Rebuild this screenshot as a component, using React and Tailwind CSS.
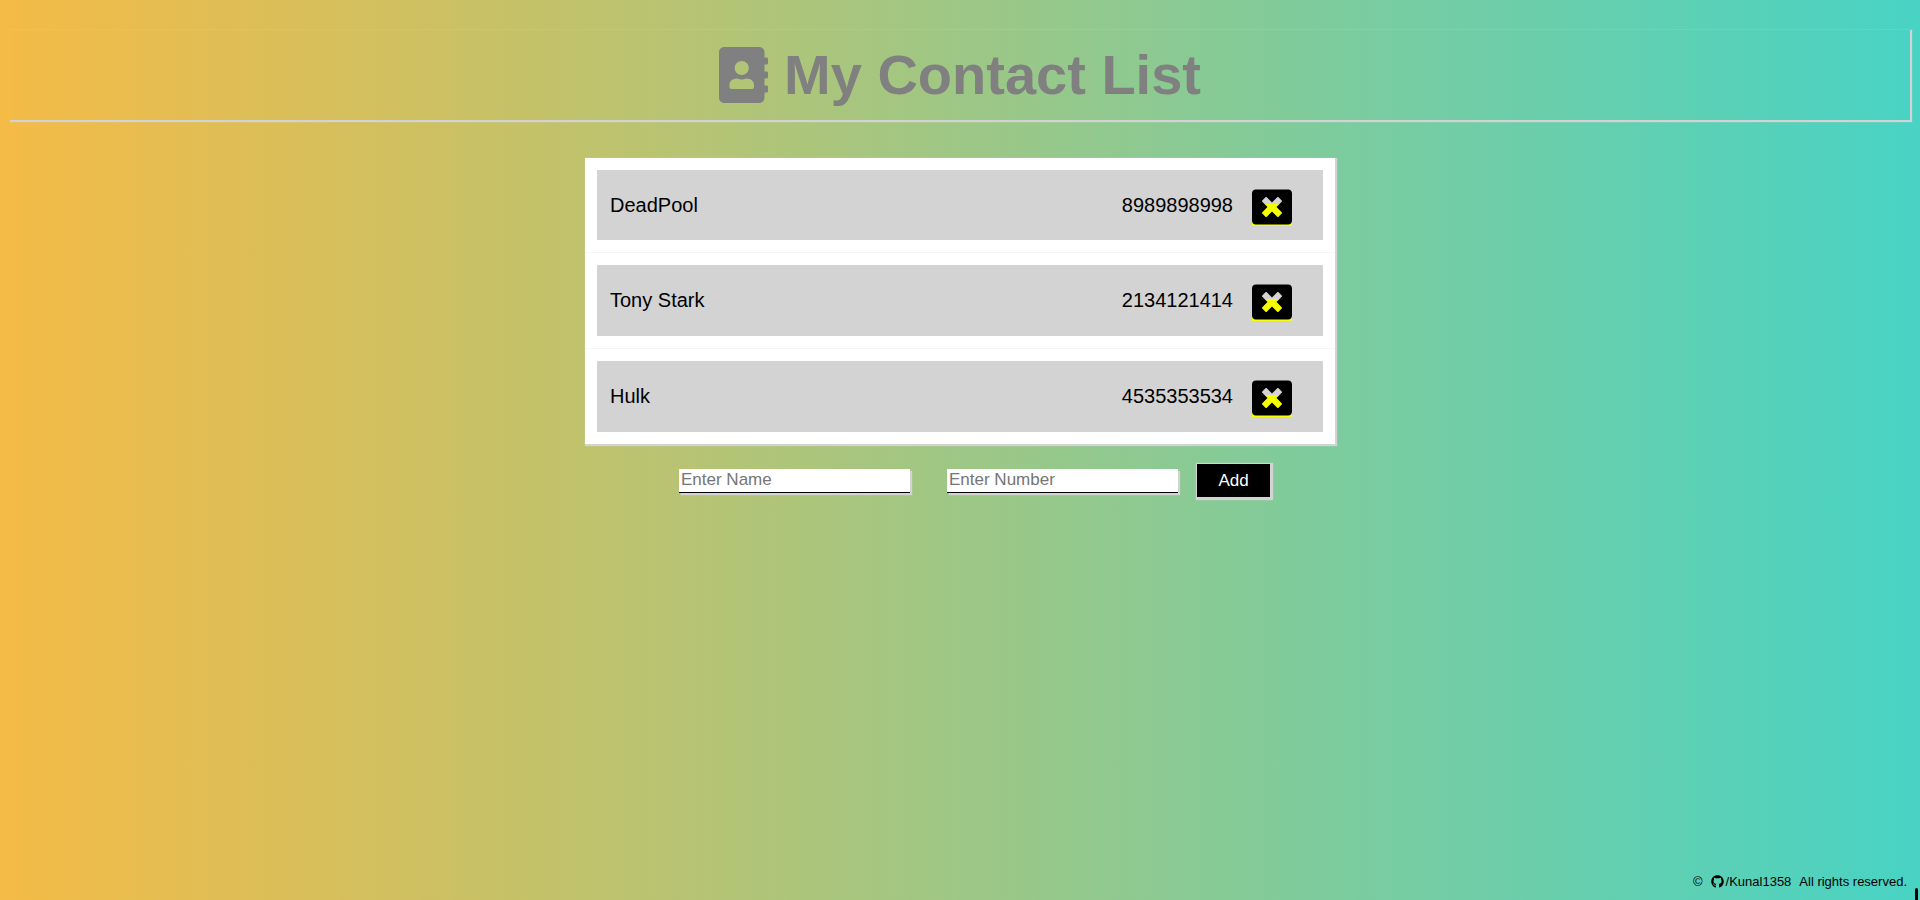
import { FaAddressBook, FaGithub, FaWindowClose } from "react-icons/fa";

const contacts = [
  { name: "DeadPool", number: "8989898998" },
  { name: "Tony Stark", number: "2134121414" },
  { name: "Hulk", number: "4535353534" },
];

function ContactRow({ name, number }) {
  return (
    <li className="flex border-b border-[#f5f5f5] p-3 last:border-b-0">
      <div className="flex flex-1 items-center bg-[#d3d3d3] pr-[31px] pl-[13px] text-xl text-black">
        <span className="flex-1">{name}</span>
        <span>{number}</span>
        <button
          type="button"
          aria-label={`Delete ${name}`}
          className="mt-0.5 ml-[19px] bg-linear-to-b from-transparent from-43% to-[#f6ff00] to-43%"
        >
          <FaWindowClose className="-mb-px size-10" />
        </button>
      </div>
    </li>
  );
}

function Field({ label, type }) {
  return (
    <input
      type={type}
      aria-label={label}
      placeholder={label}
      className="h-6 w-[231px] border-b border-black bg-white px-0.5 text-[17px] leading-5 text-black shadow-[2px_2px_1px_0px_#d3d3d3] outline-none placeholder:text-[#757575]"
    />
  );
}

export default function App() {
  return (
    <div className="flex min-h-screen flex-col bg-linear-to-r/srgb from-[#f4bb46] to-[#48d3c4] px-2.5 pt-[30px] font-['Liberation_Sans',Arial,sans-serif]">
      <h1 className="flex h-[90px] items-center justify-center gap-4 text-[56px] font-bold text-[#808080] shadow-[1px_1px_1px_1px_#d3d3d3]">
        <FaAddressBook className="h-14 w-[49px]" />
        <span>My Contact List</span>
      </h1>

      <main className="mt-[38px] flex flex-1 flex-col items-center">
        <ul className="grid min-h-[286px] w-full max-w-[750px] auto-rows-fr bg-white shadow-[1px_1px_1px_1px_#d3d3d3]">
          {contacts.map((contact) => (
            <ContactRow key={contact.name} {...contact} />
          ))}
        </ul>

        <form className="mt-5 flex items-center pl-[29px]">
          <Field label="Enter Name" type="text" />
          <div className="ml-[37px] flex">
            <Field label="Enter Number" type="text" />
          </div>
          <button
            type="button"
            className="ml-[19px] h-[33px] w-[73px] bg-black text-[17px] text-white shadow-[1px_1px_1px_2px_#d3d3d3]"
          >
            Add
          </button>
        </form>
      </main>

      <footer className="flex items-end justify-end text-[13px] text-black">
        <p className="flex items-center gap-2 pb-[9px]">
          <span>©</span>
          <a href="https://github.com/Kunal1358" className="flex items-center gap-0.5">
            <FaGithub className="size-[13px]" />
            <span>/Kunal1358</span>
          </a>
          <span>All rights reserved.</span>
        </p>
        <div className="-mr-2 ml-2 h-3 w-[3px] rounded-t-sm bg-black" />
      </footer>
    </div>
  );
}
